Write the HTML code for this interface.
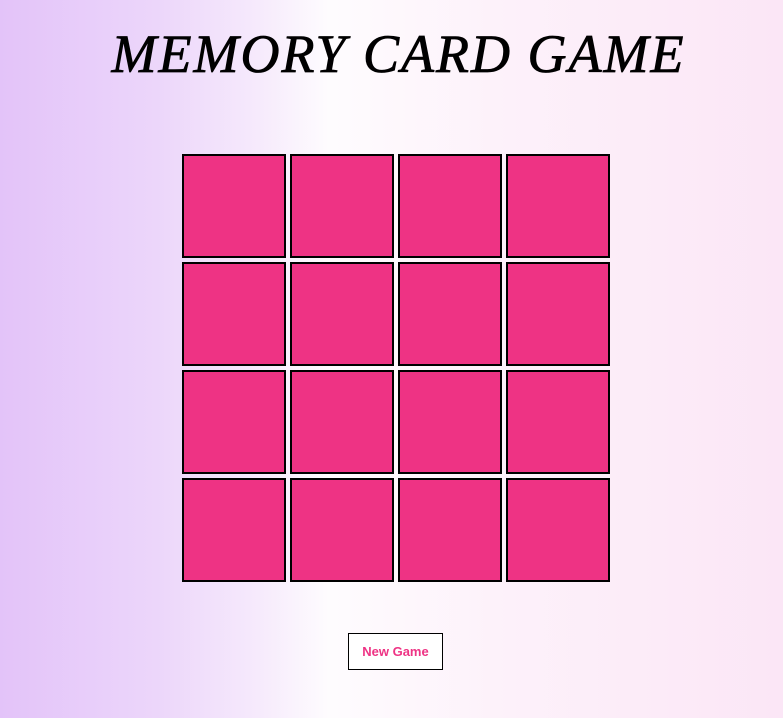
<!DOCTYPE html>
<html><head><meta charset="utf-8"><style>
html,body{margin:0;padding:0}
body{width:783px;height:718px;overflow:hidden;background:linear-gradient(90deg,#e3c3f9 0%,#ecd6fa 20%,#f6eafc 33%,#fefcfe 42%,#fdf1fa 65%,#fbe6f6 100%);position:relative;font-family:"Liberation Sans",sans-serif}
h1{position:absolute;left:0;width:783px;top:22px;margin:0;text-align:center;font-family:"Liberation Serif",serif;font-style:italic;font-weight:normal;font-size:54px;line-height:64px;color:#000;letter-spacing:2px;-webkit-text-stroke:0.8px #000;padding-left:14px;box-sizing:border-box}
.grid{position:absolute;left:182px;top:154px;display:grid;grid-template-columns:repeat(4,104px);grid-auto-rows:104px;gap:4px}
.c{box-sizing:border-box;border:2px solid #000;background:#ee3384}
button{position:absolute;left:348px;top:633px;width:95px;height:37px;background:#fff;border:1px solid #000;color:#ee3384;font-weight:bold;font-size:13px;font-family:"Liberation Sans",sans-serif;padding:0}
</style></head><body>
<h1>MEMORY CARD GAME</h1>
<div class="grid">
<div class="c"></div><div class="c"></div><div class="c"></div><div class="c"></div>
<div class="c"></div><div class="c"></div><div class="c"></div><div class="c"></div>
<div class="c"></div><div class="c"></div><div class="c"></div><div class="c"></div>
<div class="c"></div><div class="c"></div><div class="c"></div><div class="c"></div>
</div>
<button>New Game</button>
</body></html>
